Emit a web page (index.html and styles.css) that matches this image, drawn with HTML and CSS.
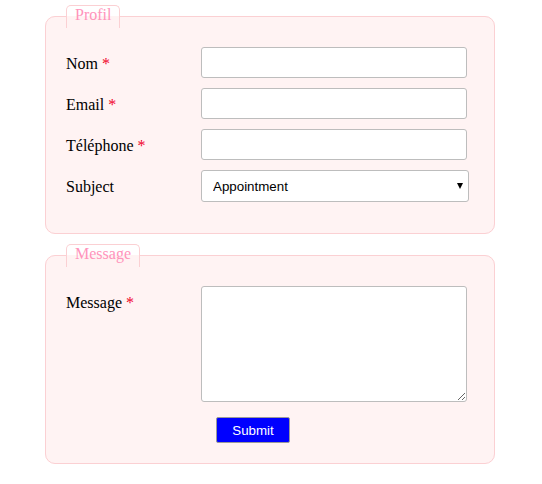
FILE: index.html
```html
<!DOCTYPE html>
<html lang="fr">
<head>
<meta charset="utf-8">
<title>Formulaire</title>
<link rel="stylesheet" href="styles.css">
</head>
<body>
<form class="form">
  <fieldset class="group">
    <legend class="group-title">Profil</legend>
    <div class="row">
      <label class="label" for="nom">Nom <span class="req">*</span></label>
      <input class="field" id="nom" type="text">
    </div>
    <div class="row">
      <label class="label" for="email">Email <span class="req">*</span></label>
      <input class="field" id="email" type="email">
    </div>
    <div class="row">
      <label class="label" for="tel">Téléphone <span class="req">*</span></label>
      <input class="field" id="tel" type="tel">
    </div>
    <div class="row">
      <label class="label" for="subject">Subject</label>
      <div class="select-wrap">
        <select class="select" id="subject">
          <option>Appointment</option>
        </select>
      </div>
    </div>
  </fieldset>
  <fieldset class="group group-message">
    <legend class="group-title">Message</legend>
    <div class="row">
      <label class="label" for="msg">Message <span class="req">*</span></label>
      <textarea class="area" id="msg"></textarea>
    </div>
    <div class="actions">
      <button class="submit" type="submit">Submit</button>
    </div>
  </fieldset>
</form>
</body>
</html>
```
FILE: styles.css
```css
html, body {
  margin: 0;
  background: #ffffff;
}

.form {
  width: 450px;
  padding: 5px 0 0 45px;
  font-family: "Liberation Serif", "Times New Roman", serif;
  font-size: 16px;
  color: #000;
}

.group {
  margin: 0;
  padding: 19px 26px 21px 20px;
  border: 1px solid #fbd0d3;
  border-radius: 10px;
  background: #fff3f3;
  min-width: 0;
}

.group-message {
  margin-top: 10px;
  padding-bottom: 20px;
}

.group-title {
  padding: 0 8px 4px;
  border: 1px solid #fbd0d3;
  border-bottom: none;
  border-radius: 5px 5px 0 0;
  color: #ff94bb;
  line-height: 18px;
}

.row {
  display: flex;
  align-items: flex-start;
  margin-bottom: 10px;
}

.label {
  width: 135px;
  flex: none;
  padding-top: 8px;
  line-height: 18px;
}

.req {
  color: #f0002a;
}

.field,
.select,
.area,
.submit {
  font-family: "Liberation Sans", Arial, sans-serif;
  font-size: 13.33px;
}

.field {
  box-sizing: border-box;
  width: 266px;
  height: 31px;
  margin: 0;
  padding: 0 8px;
  border: 1px solid #bdbdbd;
  border-radius: 3px;
  background: #fff;
}

.select-wrap {
  position: relative;
  width: 268px;
  height: 32px;
}

.select-wrap::after {
  content: "";
  position: absolute;
  right: 6px;
  top: 13px;
  border-left: 3.5px solid transparent;
  border-right: 3.5px solid transparent;
  border-top: 6px solid #000;
  pointer-events: none;
}

.select {
  box-sizing: border-box;
  appearance: none;
  -webkit-appearance: none;
  width: 268px;
  height: 32px;
  margin: 0;
  padding: 0 20px 0 11px;
  border: 1px solid #bdbdbd;
  border-radius: 3px;
  background: #fff;
  color: #000;
}

.area {
  box-sizing: border-box;
  width: 266px;
  height: 116px;
  margin: 0;
  padding: 4px;
  border: 1px solid #bdbdbd;
  border-radius: 3px;
  background: #fff;
}

.actions {
  display: flex;
  padding: 5px 0 0 150px;
}

.submit {
  box-sizing: border-box;
  width: 74px;
  height: 26px;
  margin: 0;
  padding: 0;
  border: 1px solid #9a9a9a;
  border-radius: 2px;
  background: #0000ff;
  color: #fff;
}
```
